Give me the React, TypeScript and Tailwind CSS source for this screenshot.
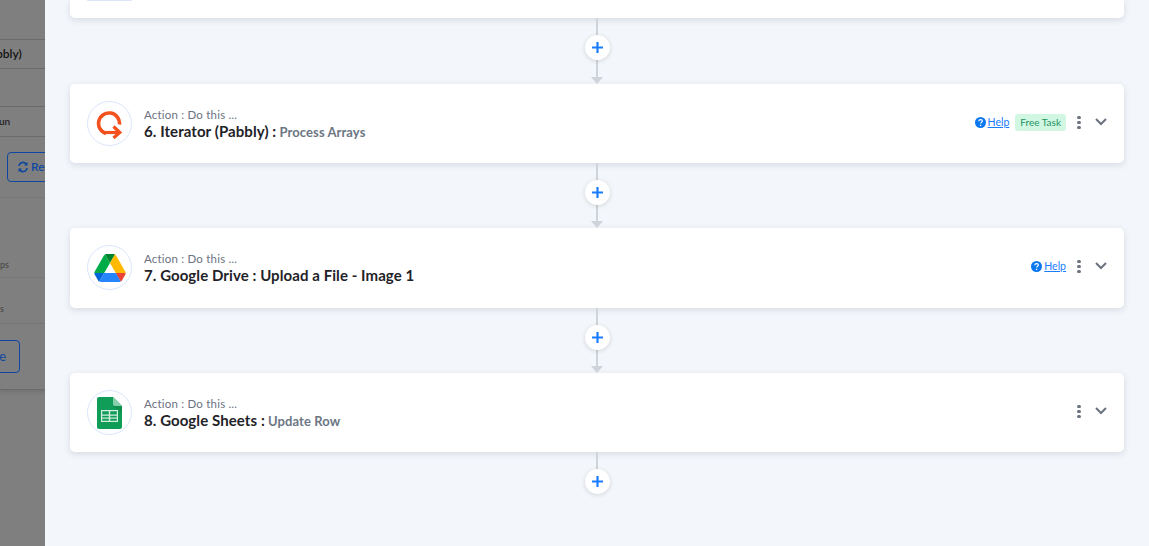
import React from "react";

function Iterator() {
  return (
    <svg width="28" height="30" viewBox="0 0 28 30" fill="none">
      <path d="M10 24.5 A10.5 10.5 0 1 1 23.5 15.500" stroke="#f4511e" strokeWidth="3.6" fill="none" />
      <path d="M9.500 23.500 H24" stroke="#f4511e" strokeWidth="3.2" />
      <path d="M17.500 17.500 L23.800 23.500 L17.500 29" stroke="#f4511e" strokeWidth="3.2" fill="none" />
    </svg>
  );
}

function Drive() {
  return (
    <svg width="32" height="28" viewBox="0 0 87.3 78">
      <path d="m6.6 66.85 3.85 6.65c.8 1.4 1.95 2.5 3.3 3.3l13.75-23.8h-27.5c0 1.55.4 3.1 1.2 4.5z" fill="#0066da" />
      <path d="m43.65 25-13.75-23.8c-1.35.8-2.5 1.9-3.3 3.3l-25.4 44a9.06 9.06 0 0 0 -1.2 4.5h27.5z" fill="#00ac47" />
      <path d="m73.55 76.8c1.35-.8 2.5-1.9 3.3-3.3l1.6-2.75 7.65-13.25c.8-1.4 1.2-2.95 1.2-4.5h-27.502l5.852 11.5z" fill="#ea4335" />
      <path d="m43.65 25 13.75-23.8c-1.35-.8-2.9-1.2-4.5-1.2h-18.5c-1.6 0-3.15.45-4.5 1.2z" fill="#00832d" />
      <path d="m59.8 53h-32.3l-13.75 23.8c1.35.8 2.9 1.2 4.5 1.2h50.8c1.6 0 3.15-.45 4.5-1.2z" fill="#2684fc" />
      <path d="m73.4 26.5-12.7-22c-.8-1.4-1.95-2.5-3.3-3.3l-13.75 23.8 16.15 28h27.45c0-1.55-.4-3.1-1.2-4.5z" fill="#ffba00" />
    </svg>
  );
}

function Sheets() {
  return (
    <svg width="25" height="32" viewBox="0 0 25 32">
      <path d="M2 0H16L25 9V30A2 2 0 0 1 23 32H2A2 2 0 0 1 0 30V2A2 2 0 0 1 2 0Z" fill="#0f9d58" />
      <path d="M16 0L25 9H18A2 2 0 0 1 16 7Z" fill="#87ceac" />
      <path d="M16 9L25 16V9Z" fill="#0b8043" opacity="0.45" />
      <path
        d="M4 13H21V25H4Z M5.200 14.200V17.500H11.800V14.200Z M13.200 14.200V17.500H19.800V14.200Z M5.200 18.800V23.800H11.800V18.800Z M13.200 18.800V23.800H19.800V18.800Z"
        fill="#d5eee1"
        fillRule="evenodd"
      />
      <path d="M5 20.500H20V21.700H5Z" fill="#d5eee1" />
    </svg>
  );
}

function Logo({ children }: { children: React.ReactNode }) {
  return (
    <div className="w-[45px] h-[45px] rounded-full border border-[#dbe6fb] bg-white flex items-center justify-center shrink-0">
      {children}
    </div>
  );
}

function Help() {
  return (
    <span className="flex items-center gap-[2px] text-[10.5px] text-[#1a7dff] mt-[1px]">
      <svg width="11" height="11" viewBox="0 0 11 11">
        <circle cx="5.5" cy="5.5" r="5.5" fill="#0b78f0" />
        <path d="M3.7 4.2C3.8 3.2 4.6 2.6 5.6 2.6C6.600 2.600 7.400 3.200 7.400 4.100C7.400 5.200 5.700 5.300 5.700 6.600" stroke="#fff" strokeWidth="1.2" fill="none" />
        <circle cx="5.6" cy="8.2" r="0.8" fill="#fff" />
      </svg>
      <span className="underline">Help</span>
    </span>
  );
}

function Controls() {
  return (
    <>
      <span className="w-[24px] flex flex-col items-center gap-[2px]">
        <span className="w-[4px] h-[3px] bg-[#6b7280] rounded-full" />
        <span className="w-[4px] h-[3px] bg-[#6b7280] rounded-full" />
        <span className="w-[4px] h-[3px] bg-[#6b7280] rounded-full" />
      </span>
      <svg className="ml-[4px]" width="12" height="8" viewBox="0 0 12 8" fill="none">
        <path d="M1 1L6 6L11 1" stroke="#6b7280" strokeWidth="2" />
      </svg>
    </>
  );
}

function Connector({ h = 65, arrow = true }: { h?: number; arrow?: boolean }) {
  return (
    <div className="flex flex-col items-center shrink-0 relative" style={{ height: h }}>
      <div className="w-[2px] grow bg-[#cfd4da]" />
      {arrow && (
        <div className="w-0 h-0 border-l-[6px] border-r-[6px] border-t-[7px] border-l-transparent border-r-transparent border-t-[#cfd4da]" />
      )}
      <div className="absolute top-[17px] w-[25px] h-[25px] rounded-full bg-white shadow-[0_1px_5px_rgba(0,0,0,0.14)] flex items-center justify-center">
        <svg width="11" height="11" viewBox="0 0 11 11">
          <path d="M5.5 0V11M0 5.5H11" stroke="#1a7dff" strokeWidth="2.2" />
        </svg>
      </div>
    </div>
  );
}

function Card({
  logo,
  title,
  sub,
  right,
  h,
}: {
  logo: React.ReactNode;
  title: string;
  sub?: string;
  right: React.ReactNode;
  h: number;
}) {
  return (
    <div
      className="bg-white rounded-[5px] shadow-[0_2px_6px_rgba(60,80,110,0.16)] flex items-start pl-[17px] pr-[17px] pt-[17px] shrink-0"
      style={{ height: h }}
    >
      <Logo>{logo}</Logo>
      <div className="ml-[12px] flex flex-col">
        <div className="text-[11.5px] leading-[14px] text-[#6b7280] tracking-[0.2px] mt-[7px]">Action : Do this ...</div>
        <div className="text-[15px] leading-[18px] font-bold text-[#1f2328] tracking-[0.08px]">
          {title}
          {sub && <span className="text-[13px] text-[#6c7683]"> {sub}</span>}
        </div>
      </div>
      <div className="ml-auto flex items-center mt-[13px] h-[16px]">{right}</div>
    </div>
  );
}

function SideRow({ className, children }: { className?: string; children?: React.ReactNode }) {
  return <div className={"border-b w-full shrink-0 flex items-center overflow-hidden " + (className ?? "")}>{children}</div>;
}

export default function App() {
  return (
    <div className="w-[1149px] h-[546px] overflow-hidden flex bg-[#f3f6fa] font-['Lato',sans-serif]">
      <aside className="w-[45px] h-full bg-[#7f7f7f] shrink-0 flex flex-col overflow-hidden">
        <SideRow className="h-[40px] border-[#6b6b6b]" />
        <SideRow className="h-[29px] border-[#6b6b6b]">
          <span className="text-[12px] font-semibold text-[#111] whitespace-nowrap ml-[-4px]">bbly)</span>
        </SideRow>
        <SideRow className="h-[38px] border-[#6b6b6b]" />
        <SideRow className="h-[30px] border-[#6b6b6b]">
          <span className="text-[10px] font-semibold text-[#222] ml-[-1px]">un</span>
        </SideRow>
        <SideRow className="h-[61px] border-[#787878]">
          <div className="ml-[7px] w-[60px] h-[30px] shrink-0 rounded-[4px] border border-[#0d47a1] flex items-center pl-[9px] gap-[2px] text-[#0d47a1] text-[12px] font-semibold">
            <svg width="12" height="12" viewBox="0 0 12 12" fill="none">
              <path d="M2 5A4 4 0 0 1 9.5 3.5M10 7A4 4 0 0 1 2.5 8.5" stroke="#0d47a1" strokeWidth="1.6" />
              <path d="M10.5 1V4.5H7M1.500 11V7.500H5" fill="#0d47a1" />
            </svg>
            Re
          </div>
        </SideRow>
        <SideRow className="h-[80px] border-[#787878] items-end">
          <span className="text-[9px] text-[#444] pb-[6px]">ps</span>
        </SideRow>
        <SideRow className="h-[46px] border-[#787878] items-end">
          <span className="text-[9px] text-[#444] pb-[8px]">s</span>
        </SideRow>
        <div className="h-[66px] flex items-start pt-[16px] shrink-0 border-b border-[#6b6b6b] shadow-[0_2px_4px_rgba(0,0,0,0.12)]">
          <div className="-ml-[20px] w-[40px] h-[33px] rounded-[4px] border border-[#0d47a1] flex items-center justify-end pr-[13px] text-[#0d47a1] text-[13px]">
            e
          </div>
        </div>
      </aside>
      <main className="w-[1104px] pl-[25px] pr-[25px] flex flex-col h-full overflow-hidden">
        <div className="h-[18px] bg-white rounded-b-[5px] shadow-[0_2px_6px_rgba(60,80,110,0.16)] shrink-0 flex">
          <div className="ml-[17px] w-[45px] h-[1px] rounded-b-full bg-[#dbe6fb]" />
        </div>
        <Connector h={66} />
        <Card
          h={79}
          logo={<Iterator />}
          title="6. Iterator (Pabbly) :"
          sub="Process Arrays"
          right={
            <>
              <Help />
              <span className="text-[10px] h-[17px] px-[5px] ml-[6px] mr-[1px] rounded-[3px] bg-[#d1f7e3] text-[#1d9460] flex items-center">
                Free Task
              </span>
              <Controls />
            </>
          }
        />
        <Connector h={65} />
        <Card
          h={80}
          logo={<Drive />}
          title="7. Google Drive : Upload a File - Image 1"
          right={
            <>
              <Help />
              <span className="w-[1px]" />
              <Controls />
            </>
          }
        />
        <Connector h={65} />
        <Card h={79} logo={<Sheets />} title="8. Google Sheets :" sub="Update Row" right={<Controls />} />
        <Connector h={40} arrow={false} />
      </main>
    </div>
  );
}
